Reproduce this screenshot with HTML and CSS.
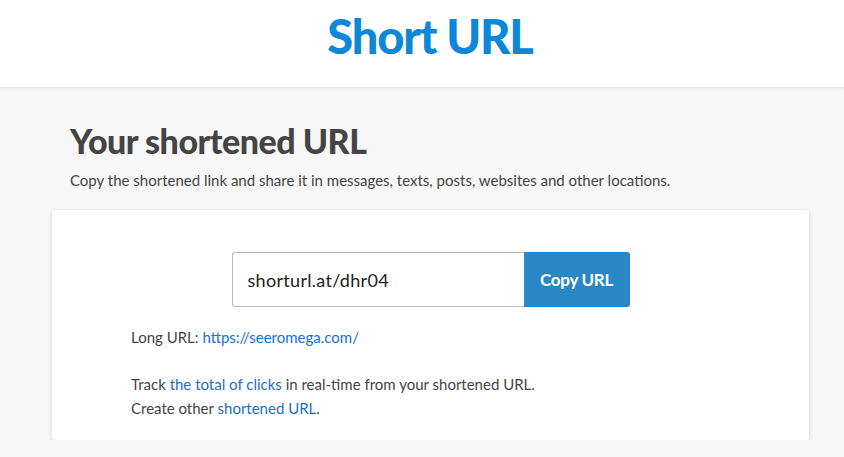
FILE: index.html
```html
<!DOCTYPE html>
<html lang="en">
<head>
  <meta charset="UTF-8">
  <title>Short URL</title>
  <link rel="stylesheet" href="styles.css">
</head>
<body>

  <!-- Header -->
  <header class="top">
    <h1 class="logo">Short URL</h1>
  </header>

  <!-- Main -->
  <main class="wrap">
    <h2>Your shortened URL</h2>
    <p class="lead">Copy the shortened link and share it in messages, texts, posts, websites and other locations.</p>

    <div class="card">
      <div class="copy-row">
        <input type="text" id="shortUrl" value="shorturl.at/dhr04" readonly>
        <button onclick="copyUrl()">Copy URL</button>
      </div>
      <div class="info">
        <p>Long URL: <a href="#">https://seeromega.com/</a></p>
        <p class="gap">Track <a href="#">the total of clicks</a> in real-time from your shortened URL.<br>
        Create other <a href="#">shortened URL</a>.</p>
      </div>
    </div>
  </main>

  <script>
    function copyUrl() {
      const field = document.getElementById('shortUrl');
      field.select();
      document.execCommand('copy');
    }
  </script>

</body>
</html>
```

FILE: styles.css
```css
body {
  margin: 0;
  font-family: Lato, sans-serif;
  color: #444;
  background: #f7f7f7;
}

.top {
  background: white;
  height: 87px;
  border-bottom: 1px solid #e4e4e4;
  box-shadow: 0 1px 3px rgba(0, 0, 0, 0.06);
  display: flex;
  justify-content: center;
  align-items: center;
}

.logo {
  margin: 0 0 16px 16px;
  font-size: 47px;
  font-weight: 900;
  color: #0d87d8;
  letter-spacing: -1.2px;
}

.wrap {
  padding: 0 35px 0 52px;
}

h2 {
  margin: 32px 0 0 18px;
  font-size: 34px;
  font-weight: 900;
  letter-spacing: -0.5px;
}

.lead {
  margin: 10px 0 21px 18px;
  font-size: 15px;
}

.card {
  background: white;
  border-radius: 3px;
  box-shadow: 0 1px 4px rgba(0, 0, 0, 0.15);
  padding: 42px 0 20px 79px;
}

.copy-row {
  display: flex;
  justify-content: center;
  padding-right: 79px;
}

input {
  width: 292px;
  height: 55px;
  box-sizing: border-box;
  border: 1px solid #bbb;
  border-right: none;
  border-radius: 3px 0 0 3px;
  padding: 0 15px;
  font-family: Lato, sans-serif;
  font-size: 18px;
  letter-spacing: 0.3px;
  color: #222;
  outline: none;
}

button {
  width: 106px;
  height: 55px;
  border: none;
  border-radius: 0 3px 3px 0;
  background: #2a87c6;
  color: white;
  font-family: Lato, sans-serif;
  font-size: 17px;
  font-weight: bold;
  letter-spacing: -0.3px;
  cursor: pointer;
}

.info p {
  margin: 0;
  font-size: 15px;
  line-height: 24px;
}

.info p:first-child {
  margin-top: 18px;
}

.info .gap {
  margin-top: 23px;
}

.info a {
  color: #1a6fcc;
  text-decoration: none;
}
```
